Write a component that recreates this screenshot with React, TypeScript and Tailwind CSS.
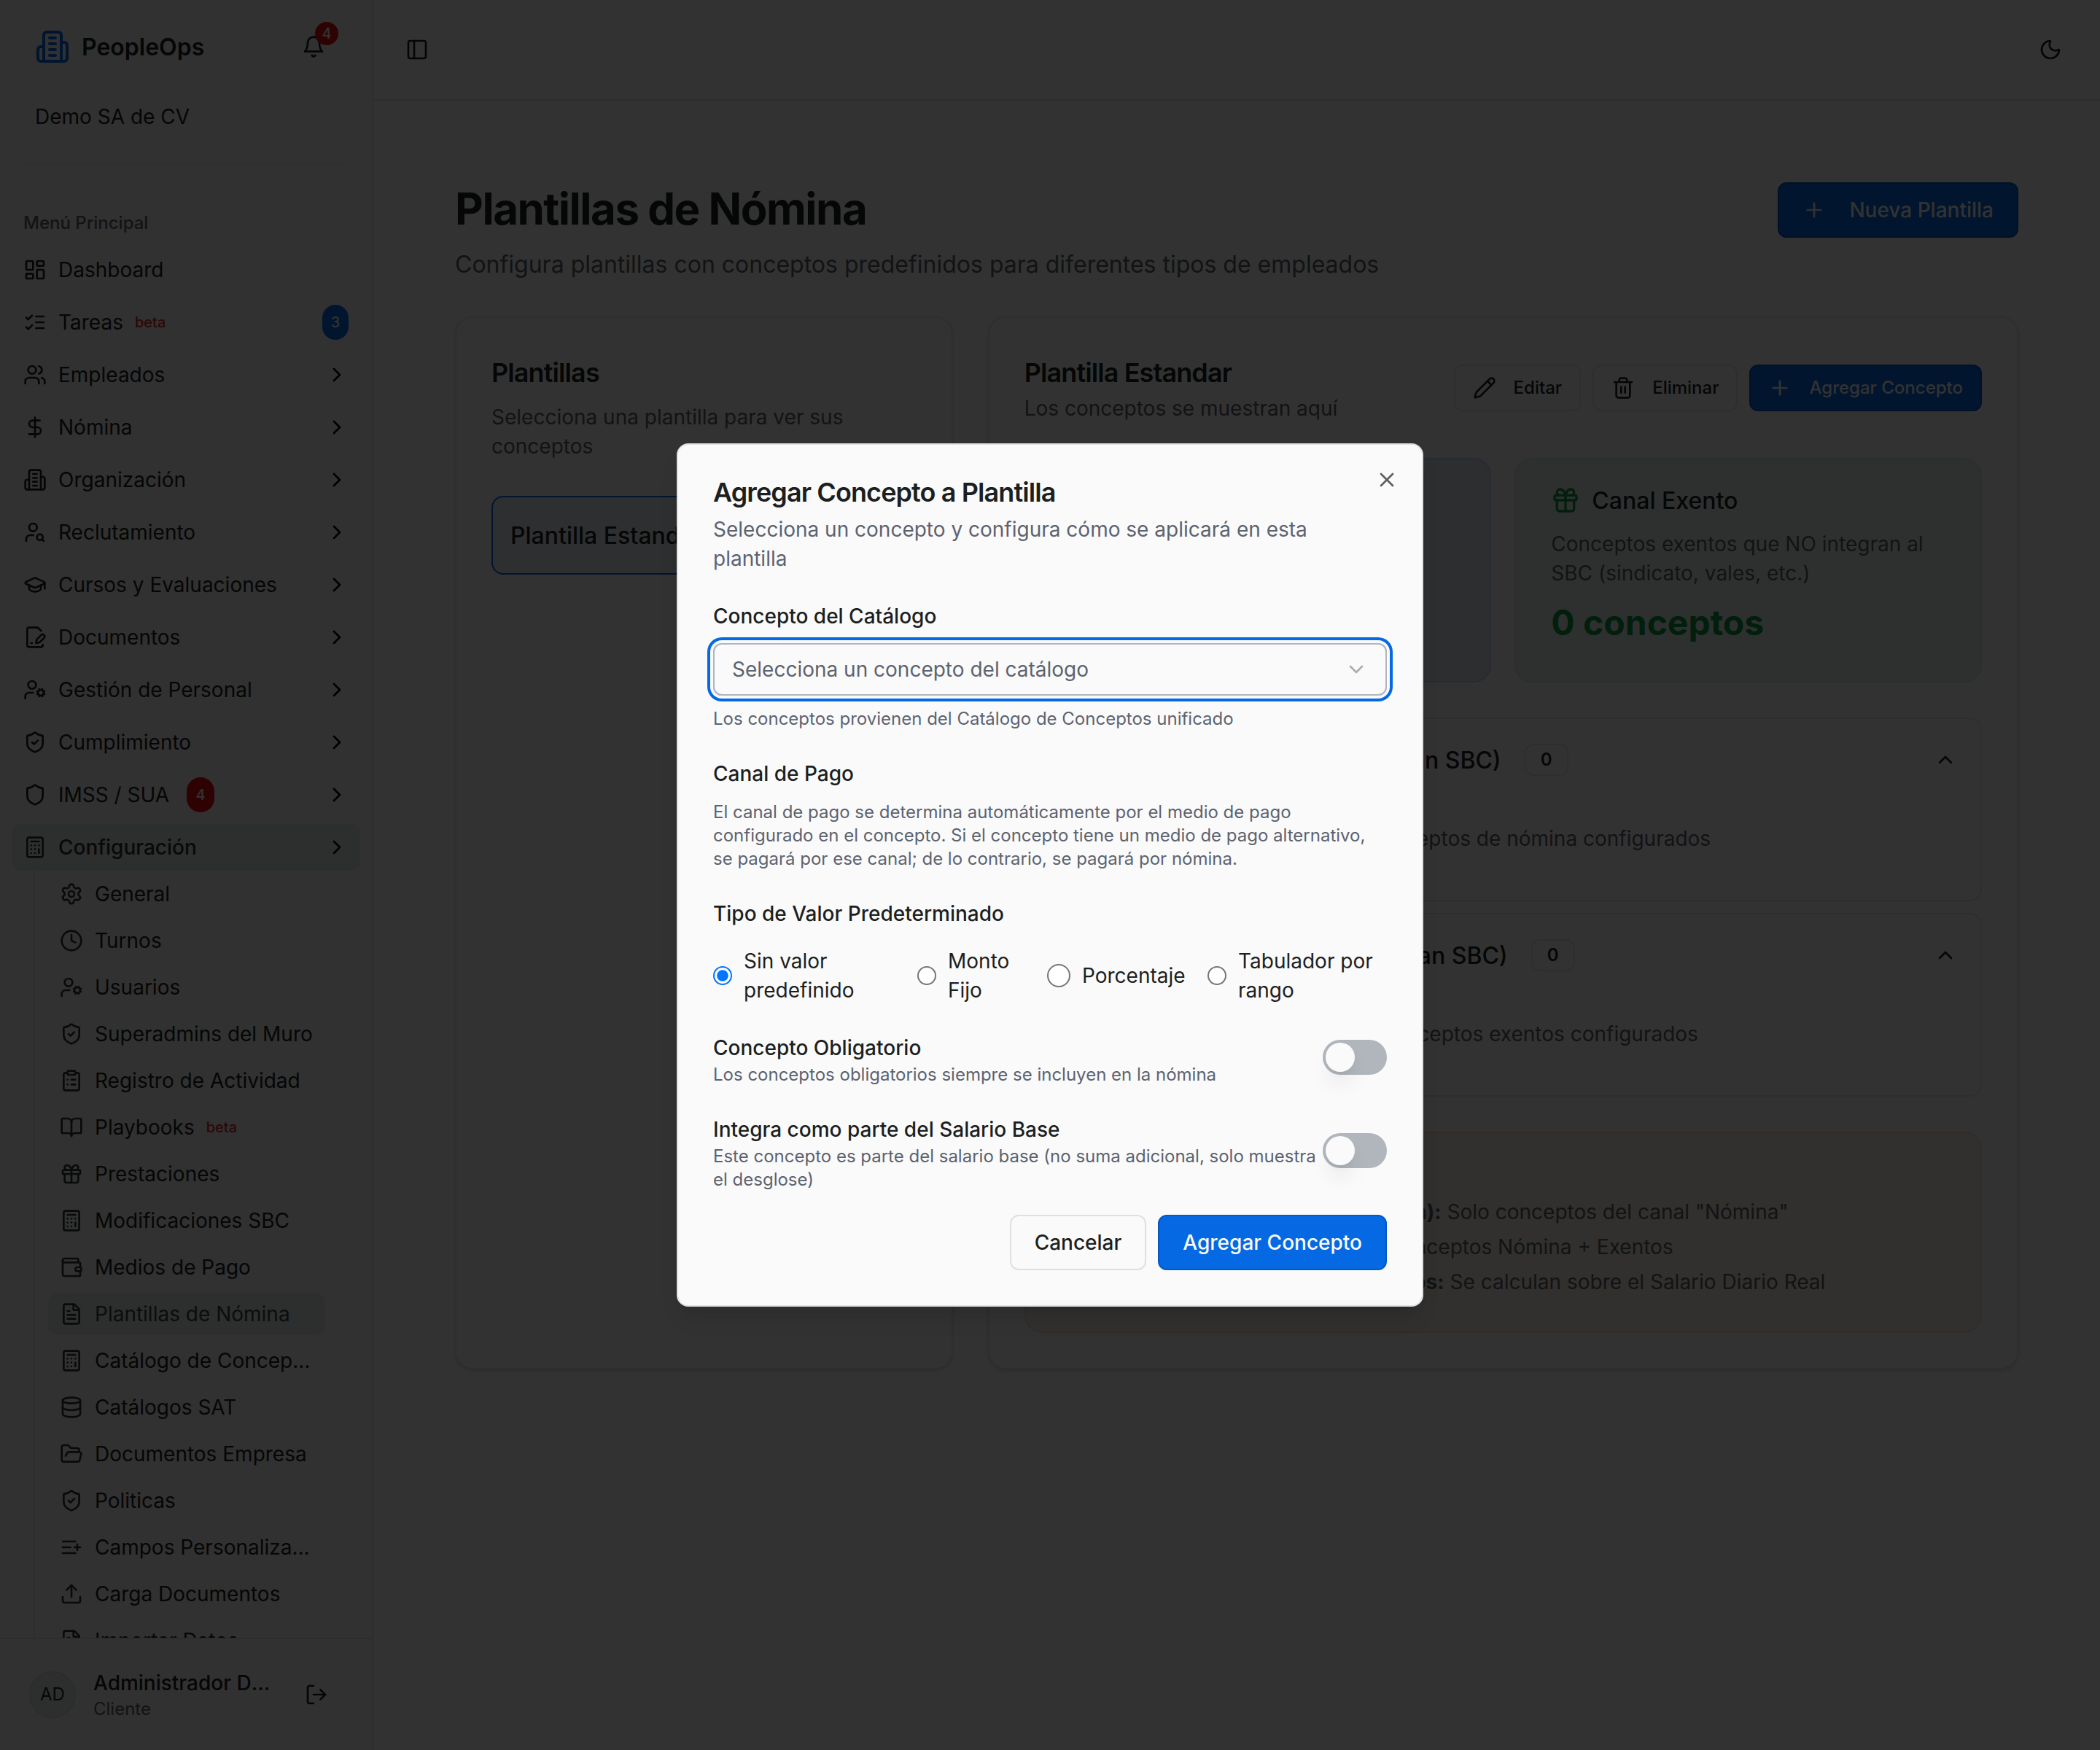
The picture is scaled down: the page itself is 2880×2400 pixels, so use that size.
import React from "react";
import {
  BookOpen, Calculator, ChevronDown, ChevronRight, ChevronUp, ClipboardList, Clock, Database, DollarSign,
  FileText, FilePenLine, FolderOpen, Gift, GraduationCap, LayoutDashboard, LogOut, Moon, PanelLeft, Pencil,
  Plus, Settings, Shield, ShieldCheck, Upload, UserCog, UserSearch, Users, Wallet, X,
} from "lucide-react";

type IconType = React.ComponentType<{ className?: string }>;

function glyph(paths: string[]): IconType {
  return function Glyph({ className }) {
    return (
      <svg viewBox="0 0 24 24" fill="none" stroke="currentColor" strokeWidth="2" strokeLinecap="round" strokeLinejoin="round" className={className}>
        {paths.map((d) => (
          <path key={d} d={d} />
        ))}
      </svg>
    );
  };
}

const Building = glyph([
  "M6 22V4a2 2 0 0 1 2-2h8a2 2 0 0 1 2 2v18Z",
  "M6 12H4a2 2 0 0 0-2 2v6a2 2 0 0 0 2 2h2",
  "M18 9h2a2 2 0 0 1 2 2v9a2 2 0 0 1-2 2h-2",
  "M10 6h4",
  "M10 10h4",
  "M10 14h4",
  "M10 18h4",
]);
const BellIcon = glyph(["M6 8a6 6 0 0 1 12 0c0 7 3 9 3 9H3s3-2 3-9", "M10.3 21a1.94 1.94 0 0 0 3.4 0"]);
const Checks = glyph(["m3 17 2 2 4-4", "m3 7 2 2 4-4", "M13 6h8", "M13 12h8", "M13 18h8"]);
const ListAdd = glyph(["M11 12H3", "M16 6H3", "M16 18H3", "M18 9v6", "M21 12h-6"]);
const Trash = glyph(["M3 6h18", "M19 6v14c0 1-1 2-2 2H7c-1 0-2-1-2-2V6", "M8 6V4c0-1 1-2 2-2h4c1 0 2 1 2 2v2", "M10 11v6", "M14 11v6"]);

type Item = { icon: IconType; label: string; beta?: boolean; blue?: string; red?: string; arrow?: boolean; active?: boolean };

const MENU: Item[] = [
  { icon: LayoutDashboard, label: "Dashboard" },
  { icon: Checks, label: "Tareas", beta: true, blue: "3" },
  { icon: Users, label: "Empleados", arrow: true },
  { icon: DollarSign, label: "Nómina", arrow: true },
  { icon: Building, label: "Organización", arrow: true },
  { icon: UserSearch, label: "Reclutamiento", arrow: true },
  { icon: GraduationCap, label: "Cursos y Evaluaciones", arrow: true },
  { icon: FilePenLine, label: "Documentos", arrow: true },
  { icon: UserCog, label: "Gestión de Personal", arrow: true },
  { icon: ShieldCheck, label: "Cumplimiento", arrow: true },
  { icon: Shield, label: "IMSS / SUA", red: "4", arrow: true },
  { icon: Calculator, label: "Configuración", arrow: true, active: true },
];

const SUBMENU: Item[] = [
  { icon: Settings, label: "General" },
  { icon: Clock, label: "Turnos" },
  { icon: UserCog, label: "Usuarios" },
  { icon: ShieldCheck, label: "Superadmins del Muro" },
  { icon: ClipboardList, label: "Registro de Actividad" },
  { icon: BookOpen, label: "Playbooks", beta: true },
  { icon: Gift, label: "Prestaciones" },
  { icon: Calculator, label: "Modificaciones SBC" },
  { icon: Wallet, label: "Medios de Pago" },
  { icon: FileText, label: "Plantillas de Nómina", active: true },
  { icon: Calculator, label: "Catálogo de Conceptos" },
  { icon: Database, label: "Catálogos SAT" },
  { icon: FolderOpen, label: "Documentos Empresa" },
  { icon: ShieldCheck, label: "Politicas" },
  { icon: ListAdd, label: "Campos Personalizados" },
  { icon: Upload, label: "Carga Documentos" },
  { icon: FileText, label: "Importar Datos" },
];

function Sidebar() {
  return (
    <aside className="flex h-full w-64 shrink-0 flex-col border-r border-[#e0e0e0] bg-[#f2f2f2]">
      <div className="flex h-16 shrink-0 items-center pl-6 pr-[26px]">
        <Building className="size-6 text-[#0569e3]" />
        <span className="ml-2 pt-px text-base font-semibold">PeopleOps</span>
        <span className="relative ml-auto flex size-7 items-center justify-center">
          <BellIcon className="size-4" />
          <span className="absolute -right-[3px] -top-[3px] flex size-4 items-center justify-center rounded-full bg-[#e60c0c] text-[10px] font-medium text-neutral-50">4</span>
        </span>
      </div>
      <div className="flex h-8 items-center pl-6 text-sm">Demo SA de CV</div>
      <div className="mx-4 mt-4 h-px shrink-0 bg-[#e8e8e8]" />
      <div className="flex min-h-0 flex-1 flex-col overflow-hidden px-2 pt-6">
        <div className="flex h-8 shrink-0 items-center px-2 text-xs font-medium text-[#5c6166]">Menú Principal</div>
        <div className="flex flex-col gap-1">
          {MENU.map((m) => (
            <div key={m.label} className={m.active ? "flex h-8 items-center gap-2 rounded-md bg-[#e1e6e4] px-2 text-sm font-medium text-[#2a2e2c]" : "flex h-8 items-center gap-2 px-2 text-sm"}>
              <m.icon className="size-4 shrink-0" />
              <span>{m.label}</span>
              {m.beta && <span className="text-[10px] font-medium text-[#e02424]">beta</span>}
              {m.blue && <span className="ml-auto flex h-6 w-[18px] items-center justify-center rounded-full bg-[#0569e3] text-[10px] font-medium text-neutral-50">{m.blue}</span>}
              {m.red && <span className="ml-1 flex h-6 w-[19px] items-center justify-center rounded-full bg-[#e60c0c] text-[10px] font-medium text-neutral-50">{m.red}</span>}
              {m.arrow && <ChevronRight className="ml-auto size-4 text-black" />}
            </div>
          ))}
        </div>
        <div className="ml-[15px] mr-3.5 flex flex-col gap-1 border-l border-[#e0e0e0] py-0.5 pl-[9px] pr-2.5">
          {SUBMENU.map((m) => (
            <div key={m.label} className={m.active ? "flex h-7 items-center gap-2 rounded-md bg-[#e1e6e4] px-2 text-sm text-[#3c423f]" : "flex h-7 items-center gap-2 px-2 text-sm"}>
              <m.icon className="size-4 shrink-0 text-[#303633]" />
              <span className="truncate">{m.label}</span>
              {m.beta && <span className="text-[10px] font-medium text-[#e02424]">beta</span>}
            </div>
          ))}
        </div>
      </div>
      <div className="flex h-[77px] shrink-0 items-center border-t border-[#e0e0e0] pl-5 pr-[30px]">
        <span className="flex size-8 items-center justify-center rounded-full border border-[#d6dbd8] bg-[#e1e6e4] text-xs">AD</span>
        <div className="ml-3 flex w-[124px] flex-col">
          <span className="truncate text-sm font-medium leading-5">Administrador Demo</span>
          <span className="text-xs text-[#5c6166]">Cliente</span>
        </div>
        <LogOut className="ml-auto size-4" />
      </div>
    </aside>
  );
}

function CanalCard({ icon: Icon, title, desc, tone }: { icon: IconType; title: string; desc: string; tone: "blue" | "green" }) {
  const green = tone === "green";
  return (
    <div className={green ? "rounded-xl border border-[#d0e4da] bg-[#e6efeb] px-6 pb-6 pt-4" : "rounded-xl border border-[#c2d4ec] bg-[#e2e7ef] px-6 pb-6 pt-4"}>
      <div className="flex h-6 items-center gap-2">
        <Icon className={green ? "size-5 text-[#0d9440]" : "size-5 text-[#0569e3]"} />
        <span className="pt-px text-base font-medium">{title}</span>
      </div>
      <p className={green ? "mt-2 text-sm text-[#5c6166]" : "mt-2 w-[230px] text-sm text-[#5c6166]"}>{desc}</p>
      <p className={green ? "mt-2 text-2xl font-bold text-[#0d9440]" : "mt-2 text-2xl font-bold text-[#0569e3]"}>0 conceptos</p>
    </div>
  );
}

function Accordion({ title, empty, wide }: { title: string; empty: string; wide?: boolean }) {
  return (
    <div className="rounded-lg border border-[#e4e4e4]">
      <div className="flex h-14 items-center px-4">
        <span className={wide ? "w-[314.5px] whitespace-nowrap pt-px text-right text-base font-medium" : "w-[310px] whitespace-nowrap pt-px text-right text-base font-medium"}>{title}</span>
        <span className="ml-4 rounded-md border border-[#e4e4e4] px-2.5 py-0.5 text-xs font-semibold">0</span>
        <ChevronUp className="ml-auto size-4" />
      </div>
      <p className="pb-8 pt-4 text-center text-sm text-[#5c6166]">{empty}</p>
    </div>
  );
}

function Main() {
  return (
    <main className="flex min-w-0 flex-1 flex-col">
      <header className="flex h-[69px] items-center justify-between border-b border-[#e4e4e4] pl-[22px] pr-[26px]">
        <PanelLeft className="size-4" />
        <Moon className="size-4" />
      </header>
      <div className="p-14">
        <div className="flex h-[68px] items-start justify-between">
          <div>
            <h1 className="text-3xl font-bold tracking-tight">Plantillas de Nómina</h1>
            <p className="mt-[8.5px] text-base text-[#5c6166]">Configura plantillas con conceptos predefinidos para diferentes tipos de empleados</p>
          </div>
          <button className="flex items-center gap-4 rounded-md border border-[#0458c0] bg-[#0569e3] px-4 py-2 text-sm font-medium text-neutral-50">
            <Plus className="size-4" />
            Nueva Plantilla
          </button>
        </div>
        <div className="mt-6 grid grid-cols-3 gap-6">
          <section className="rounded-xl border border-[#e4e4e4] bg-[#fafafa] p-6 shadow-sm">
            <h2 className="-mt-[0.5px] text-lg font-semibold tracking-tight">Plantillas</h2>
            <p className="mt-[6.5px] text-sm text-[#5c6166]">Selecciona una plantilla para ver sus conceptos</p>
            <div className="mt-6 flex h-[54px] items-center rounded-lg border border-[#0569e3] bg-[#e4e8ee] px-3 pt-px text-base font-medium">Plantilla Estandar</div>
          </section>
          <section className="col-span-2 rounded-xl border border-[#e4e4e4] bg-[#fafafa] p-6 shadow-sm">
            <div className="flex items-center justify-between">
              <div>
                <h2 className="-mt-[0.5px] mb-[0.5px] text-lg font-semibold tracking-tight">Plantilla Estandar</h2>
                <p className="text-sm text-[#5c6166]">Los conceptos se muestran aquí</p>
              </div>
              <div className="flex gap-2 text-xs font-medium">
                <button className="flex h-8 items-center gap-3 rounded-md border border-[#e4e4e4] px-3">
                  <Pencil className="size-4" />
                  Editar
                </button>
                <button className="flex h-8 items-center gap-3 rounded-md border border-[#e4e4e4] px-3">
                  <Trash className="size-4" />
                  Eliminar
                </button>
                <button className="flex h-8 items-center gap-3 rounded-md border border-[#0458c0] bg-[#0569e3] px-3 text-neutral-50">
                  <Plus className="size-4" />
                  Agregar Concepto
                </button>
              </div>
            </div>
            <div className="mt-6 grid grid-cols-2 gap-4">
              <CanalCard icon={DollarSign} tone="blue" title="Canal Nómina" desc="Conceptos que integran al SBC (sueldo, comisiones, etc.)" />
              <CanalCard icon={Gift} tone="green" title="Canal Exento" desc="Conceptos exentos que NO integran al SBC (sindicato, vales, etc.)" />
            </div>
            <div className="mt-6 flex flex-col gap-2">
              <Accordion title="Conceptos Nómina (Integran SBC)" empty="No hay conceptos de nómina configurados" />
              <Accordion title="Conceptos Exentos (No integran SBC)" empty="No hay conceptos exentos configurados" wide />
            </div>
            <div className="mt-6 rounded-xl border border-[#f8dcc0] bg-[#f5efe7] px-6 pb-6 pt-4 text-sm text-[#5c6166]">
              <p className="h-7 text-base font-medium">Reglas de Cálculo</p>
              <div className="flex flex-col gap-1">
                <p className="flex whitespace-nowrap"><strong className="w-[261px] text-right">IMSS (SBC, canal nómina):</strong>&nbsp;Solo conceptos del canal "Nómina"</p>
                <p className="w-[420px] whitespace-nowrap text-right"><strong>ISR:</strong> Conceptos Nómina + Exentos</p>
                <p className="flex whitespace-nowrap"><strong className="w-[263px] text-right">Descuentos:</strong>&nbsp;Se calculan sobre el Salario Diario Real</p>
              </div>
            </div>
          </section>
        </div>
      </div>
    </main>
  );
}

const RADIOS = [
  { label: "Sin valor predefinido", box: "flex w-[124px] items-center gap-2", dot: "h-4 w-[13px] shrink-0", on: true },
  { label: "Monto Fijo", box: "flex w-[73px] items-center gap-2", dot: "h-4 w-[13px] shrink-0", on: false },
  { label: "Porcentaje", box: "flex w-[94px] items-center gap-2", dot: "h-4 w-4 shrink-0", on: false },
  { label: "Tabulador por rango", box: "flex w-[123px] items-center gap-2", dot: "h-4 w-[13px] shrink-0", on: false },
];

function FieldLabel({ children }: { children: string }) {
  return (
    <div className="h-6 pt-[5.5px] text-sm font-medium leading-4">
      <label>{children}</label>
    </div>
  );
}

function Toggle() {
  return (
    <span className="flex h-6 w-11 shrink-0 items-center rounded-full bg-[#b1b6bd] px-0.5">
      <span className="size-5 rounded-full bg-[#fafafa] shadow-lg" />
    </span>
  );
}

function Dialog() {
  return (
    <div className="relative flex w-lg flex-col gap-4 rounded-lg border border-[#dfe0e2] bg-[#fafafa] p-6 shadow-lg">
      <X className="absolute right-4 top-4 size-4 opacity-70" />
      <div className="flex flex-col gap-1.5">
        <h2 className="-mt-[0.5px] mb-[0.5px] text-lg font-semibold leading-none tracking-tight">Agregar Concepto a Plantilla</h2>
        <p className="text-sm text-[#5c6370]">Selecciona un concepto y configura cómo se aplicará en esta plantilla</p>
      </div>
      <div>
        <FieldLabel>Concepto del Catálogo</FieldLabel>
        <div className="mt-2 flex h-9 items-center justify-between rounded-md border border-[#b1b6bd] px-3 text-sm text-[#5c6370] ring-2 ring-[#0569e3] ring-offset-2 ring-offset-[#fafafa]">
          Selecciona un concepto del catálogo
          <ChevronDown className="size-4 opacity-50" />
        </div>
        <p className="mt-2 text-xs text-[#5c6370]">Los conceptos provienen del Catálogo de Conceptos unificado</p>
      </div>
      <div>
        <FieldLabel>Canal de Pago</FieldLabel>
        <p className="mt-2 text-xs text-[#5c6370]">El canal de pago se determina automáticamente por el medio de pago configurado en el concepto. Si el concepto tiene un medio de pago alternativo, se pagará por ese canal; de lo contrario, se pagará por nómina.</p>
      </div>
      <div>
        <FieldLabel>Tipo de Valor Predeterminado</FieldLabel>
        <div className="mt-3 flex gap-4 text-sm">
          {RADIOS.map((r) => (
            <label key={r.label} className={r.box}>
              <input type="radio" name="tipo" defaultChecked={r.on} className={r.dot} />
              <span>{r.label}</span>
            </label>
          ))}
        </div>
      </div>
      <div className="flex items-center justify-between">
        <div>
          <FieldLabel>Concepto Obligatorio</FieldLabel>
          <p className="text-xs text-[#5c6370]">Los conceptos obligatorios siempre se incluyen en la nómina</p>
        </div>
        <Toggle />
      </div>
      <div className="flex items-center justify-between">
        <div>
          <FieldLabel>Integra como parte del Salario Base</FieldLabel>
          <p className="text-xs text-[#5c6370]">Este concepto es parte del salario base (no suma adicional, solo muestra el desglose)</p>
        </div>
        <Toggle />
      </div>
      <div className="flex justify-end gap-2 text-sm font-medium">
        <button className="rounded-md border border-[#dfe0e2] px-4 py-2">Cancelar</button>
        <button className="rounded-md border border-[#0458c0] bg-[#0569e3] px-4 py-2 text-neutral-50">Agregar Concepto</button>
      </div>
    </div>
  );
}

export default function App() {
  return (
    <div className="relative flex h-[1200px] w-[1440px] overflow-hidden bg-[#fafafa] font-['Inter',sans-serif] text-[#1c1f21] antialiased [zoom:2]">
      <Sidebar />
      <Main />
      <div className="absolute inset-0 flex items-center justify-center bg-black/80">
        <Dialog />
      </div>
    </div>
  );
}
